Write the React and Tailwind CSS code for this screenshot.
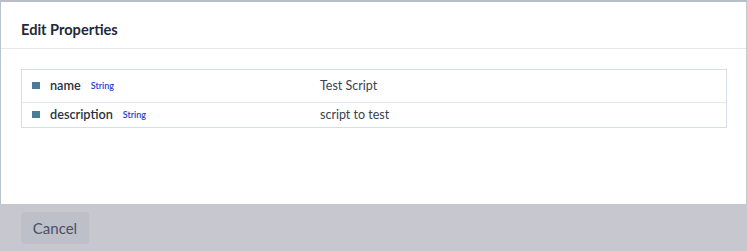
export default function App() {
  const rows = [
    { name: "name", type: "String", value: "Test Script", h: "h-[32px]" },
    { name: "description", type: "String", value: "script to test", h: "h-[25px]" },
  ];
  return (
    <div className="w-[747px] h-[251px] bg-[#c6c7cf] flex flex-col overflow-hidden font-['Lato',sans-serif]">
      <div className="h-[2px] bg-[#b9bfc8] shrink-0"></div>
      <div className="h-[202px] bg-white border-l border-[#b8c4d0] mr-[1px] flex flex-col shrink-0">
        <div className="h-[47px] border-b border-[#e5e7eb] px-[20px] pt-[18px] shrink-0">
          <h2 className="text-[14.6px] leading-[20px] font-bold text-[#1f2a3c]">Edit Properties</h2>
        </div>
        <div className="px-[20px] pt-[20px]">
          <div className="w-[706px] border border-[#d8dde3]">
            {rows.map((r, i) => (
              <div
                key={r.name}
                className={`flex items-center ${r.h} ${i > 0 ? "border-t border-[#e3e6ea]" : ""}`}
              >
                <div className="w-[298px] flex items-center pl-[10px]">
                  <span className="w-[8px] h-[7px] bg-[#4a7b9b] mr-[10px]"></span>
                  <span className="text-[12.7px] font-semibold text-[#2a3242]">{r.name}</span>
                  <span className="ml-[10px] text-[9px] font-semibold text-[#2b3bd6]">{r.type}</span>
                </div>
                <div className="text-[12.5px] text-[#3a4150]">{r.value}</div>
              </div>
            ))}
          </div>
        </div>
      </div>
      <div className="px-[21px] pt-[8px]">
        <button className="w-[68px] h-[32px] rounded-[4px] bg-[#bdbfc9] text-[15px] text-[#4b5066]">
          Cancel
        </button>
      </div>
    </div>
  );
}
